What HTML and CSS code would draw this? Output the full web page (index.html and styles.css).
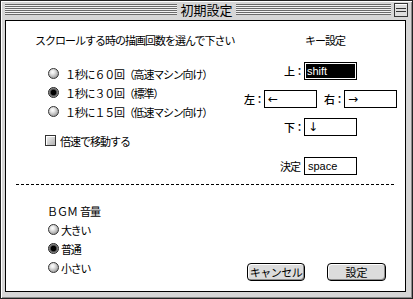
FILE: index.html
```html
<!DOCTYPE html>
<html lang="ja">
  <head>
    <meta charset="UTF-8" />
    <title>初期設定</title>
    <link rel="stylesheet" href="styles.css">
  </head>
  <body>
    <div class="window">
      <div class="titlebar">
        <div class="stripes left"></div>
        <div class="title">初期設定</div>
        <div class="title-right">
          <div class="stripes"></div>
          <svg class="shade-box" width="14" height="14" viewBox="0 0 14 14">
            <rect x="0.5" y="0.5" width="13" height="13" fill="#ddd" stroke="#333" />
            <line x1="1" y1="1.5" x2="13" y2="1.5" stroke="#fff" />
            <line x1="2" y1="5.5" x2="12" y2="5.5" stroke="#333" />
            <line x1="2" y1="8.5" x2="12" y2="8.5" stroke="#333" />
          </svg>
        </div>
      </div>

      <div class="content">
        <div class="top">
          <div class="speed">
            <p class="heading">スクロールする時の描画回数を選んで下さい</p>
            <div class="radios">
              <div class="radio"><span class="dot"></span><span class="label">１秒に６０回（高速マシン向け）</span></div>
              <div class="radio"><span class="dot on"></span><span class="label">１秒に３０回（標準）</span></div>
              <div class="radio"><span class="dot"></span><span class="label">１秒に１５回（低速マシン向け）</span></div>
            </div>
            <div class="check"><span class="box"></span><span class="label">倍速で移動する</span></div>
          </div>

          <div class="keys">
            <p class="heading keys-heading">キー設定</p>
            <div class="key-row single first">
              <span class="key-label">上：</span>
              <span class="field"><span class="selected">shift</span></span>
            </div>
            <div class="key-row">
              <span class="key-label">左：</span>
              <span class="field arrow">←</span>
              <span class="key-label right">右：</span>
              <span class="field arrow">→</span>
            </div>
            <div class="key-row single">
              <span class="key-label">下：</span>
              <span class="field arrow">↓</span>
            </div>
            <div class="key-row single enter">
              <span class="key-label">決定</span>
              <span class="field">space</span>
            </div>
          </div>
        </div>

        <div class="divider"></div>

        <div class="bottom">
          <div class="bgm">
            <p class="heading">ＢＧＭ&nbsp;&nbsp;音量</p>
            <div class="radios small">
              <div class="radio"><span class="dot"></span><span class="label">大きい</span></div>
              <div class="radio"><span class="dot on"></span><span class="label">普通</span></div>
              <div class="radio"><span class="dot"></span><span class="label">小さい</span></div>
            </div>
          </div>
          <div class="buttons">
            <button class="cancel">キャンセル</button>
            <button class="ok">設定</button>
          </div>
        </div>
      </div>
    </div>
  </body>
</html>
```

FILE: styles.css
```css
body {
  margin: 0;
  font-family: "Noto Sans CJK JP", sans-serif;
  font-size: 11px;
  color: #000;
  background: #fff;
}

.window {
  width: 413px;
  height: 299px;
  box-sizing: border-box;
  border: 1px solid #222;
  background: #d6d6d6;
  box-shadow: inset 1px 1px #fff, inset -1px -1px #8a8a8a;
  display: flex;
  flex-direction: column;
}

/* title bar */
.titlebar {
  height: 19px;
  flex: 0 0 19px;
  display: grid;
  grid-template-columns: 1fr auto 1fr;
}
.stripes {
  height: 11px;
  margin-top: 3px;
  background: repeating-linear-gradient(#6a6a6a 0 1px, #f2f2f2 1px 2px);
}
.stripes.left {
  margin-left: 4px;
}
.title {
  padding: 0 3px;
  font-size: 13px;
  line-height: 18px;
}
.title-right {
  display: flex;
}
.title-right .stripes {
  flex: 1;
}
.shade-box {
  margin: 2px 4px 0 3px;
}

/* content */
.content {
  flex: 1;
  margin: 0 6px 6px 4px;
  border: 1px solid #000;
  background: #fff;
  display: flex;
  flex-direction: column;
}
.heading {
  margin: 0;
  line-height: 12px;
  letter-spacing: -1px;
}
.top {
  display: flex;
  padding-top: 13px;
}
.speed {
  flex: 0 0 238px;
  box-sizing: border-box;
  padding-left: 29px;
}
.radios {
  margin-top: 18px;
}
.radio {
  height: 19px;
  display: flex;
  align-items: center;
  padding-left: 13px;
}
.radio .label {
  margin-left: 6px;
  letter-spacing: -1.2px;
  line-height: 12px;
}
.dot {
  width: 11px;
  height: 11px;
  box-sizing: border-box;
  border-radius: 50%;
  border: 1px solid #333;
  background: radial-gradient(circle at 40% 35%, #fff 0, #e8e8e8 25%, #a8a8a8 70%, #7a7a7a 100%);
}
.dot.on {
  border-color: #222;
  background: radial-gradient(circle, #000 0 2.5px, #444 3px, #9a9a9a 4.5px);
}
.check {
  margin-top: 10px;
  height: 19px;
  display: flex;
  align-items: center;
  padding-left: 10px;
}
.box {
  width: 11px;
  height: 11px;
  box-sizing: border-box;
  border: 1px solid #333;
  background: linear-gradient(135deg, #f4f4f4, #b0b0b0);
  box-shadow: inset 1px 1px #fff;
}
.check .label {
  margin-left: 4px;
  letter-spacing: -1px;
}

/* key settings */
.keys {
  flex: 0 0 154px;
}
.keys-heading {
  padding-left: 61px;
}
.key-row {
  display: flex;
  align-items: center;
  margin-top: 10px;
  height: 18px;
}
.key-row.first {
  margin-top: 16px;
}
.key-row.single {
  padding-left: 40px;
}
.key-row.enter {
  margin-top: 21px;
  padding-left: 36px;
}
.key-label {
  width: 20px;
  text-align: right;
  letter-spacing: -1px;
  line-height: 12px;
  font-weight: 500;
}
.key-label.right {
  margin-left: 7px;
}
.enter .key-label {
  margin-right: 4px;
  font-weight: 400;
}
.field {
  width: 53px;
  height: 18px;
  box-sizing: border-box;
  border: 1px solid #000;
  padding: 1px 1px 1px 3px;
  font-family: "Liberation Sans", Arial, sans-serif;
  font-size: 11px;
  line-height: 14px;
  display: flex;
}
.field.arrow {
  font-family: "DejaVu Sans", sans-serif;
  font-size: 12px;
}
.field .selected {
  flex: 1;
  margin-left: -2px;
  background: #000;
  color: #fff;
  padding-left: 1px;
}

.divider {
  height: 1px;
  margin: 9px 9px 0 10px;
  background: repeating-linear-gradient(90deg, #000 0 3px, transparent 3px 5px);
}

/* bottom */
.bottom {
  flex: 1;
  display: flex;
  justify-content: space-between;
  padding: 20px 19px 10px 41px;
}
.bgm .radios {
  margin-top: 3px;
}
.bgm .radio {
  padding-left: 1px;
}
.bgm .radio .label {
  margin-left: 2px;
}
.buttons {
  align-self: flex-end;
  display: flex;
  gap: 22px;
}
button {
  height: 18px;
  padding: 0;
  font-family: "Noto Sans CJK JP", sans-serif;
  font-size: 11px;
  line-height: 14px;
  color: #000;
  border: 1px solid #000;
  border-radius: 4px;
  background: #dcdcdc;
  box-shadow: inset 1px 1px #fff, inset -1px -1px #8c8c8c;
}
button.cancel {
  width: 58px;
  letter-spacing: -0.5px;
}
button.ok {
  width: 59px;
}
```
